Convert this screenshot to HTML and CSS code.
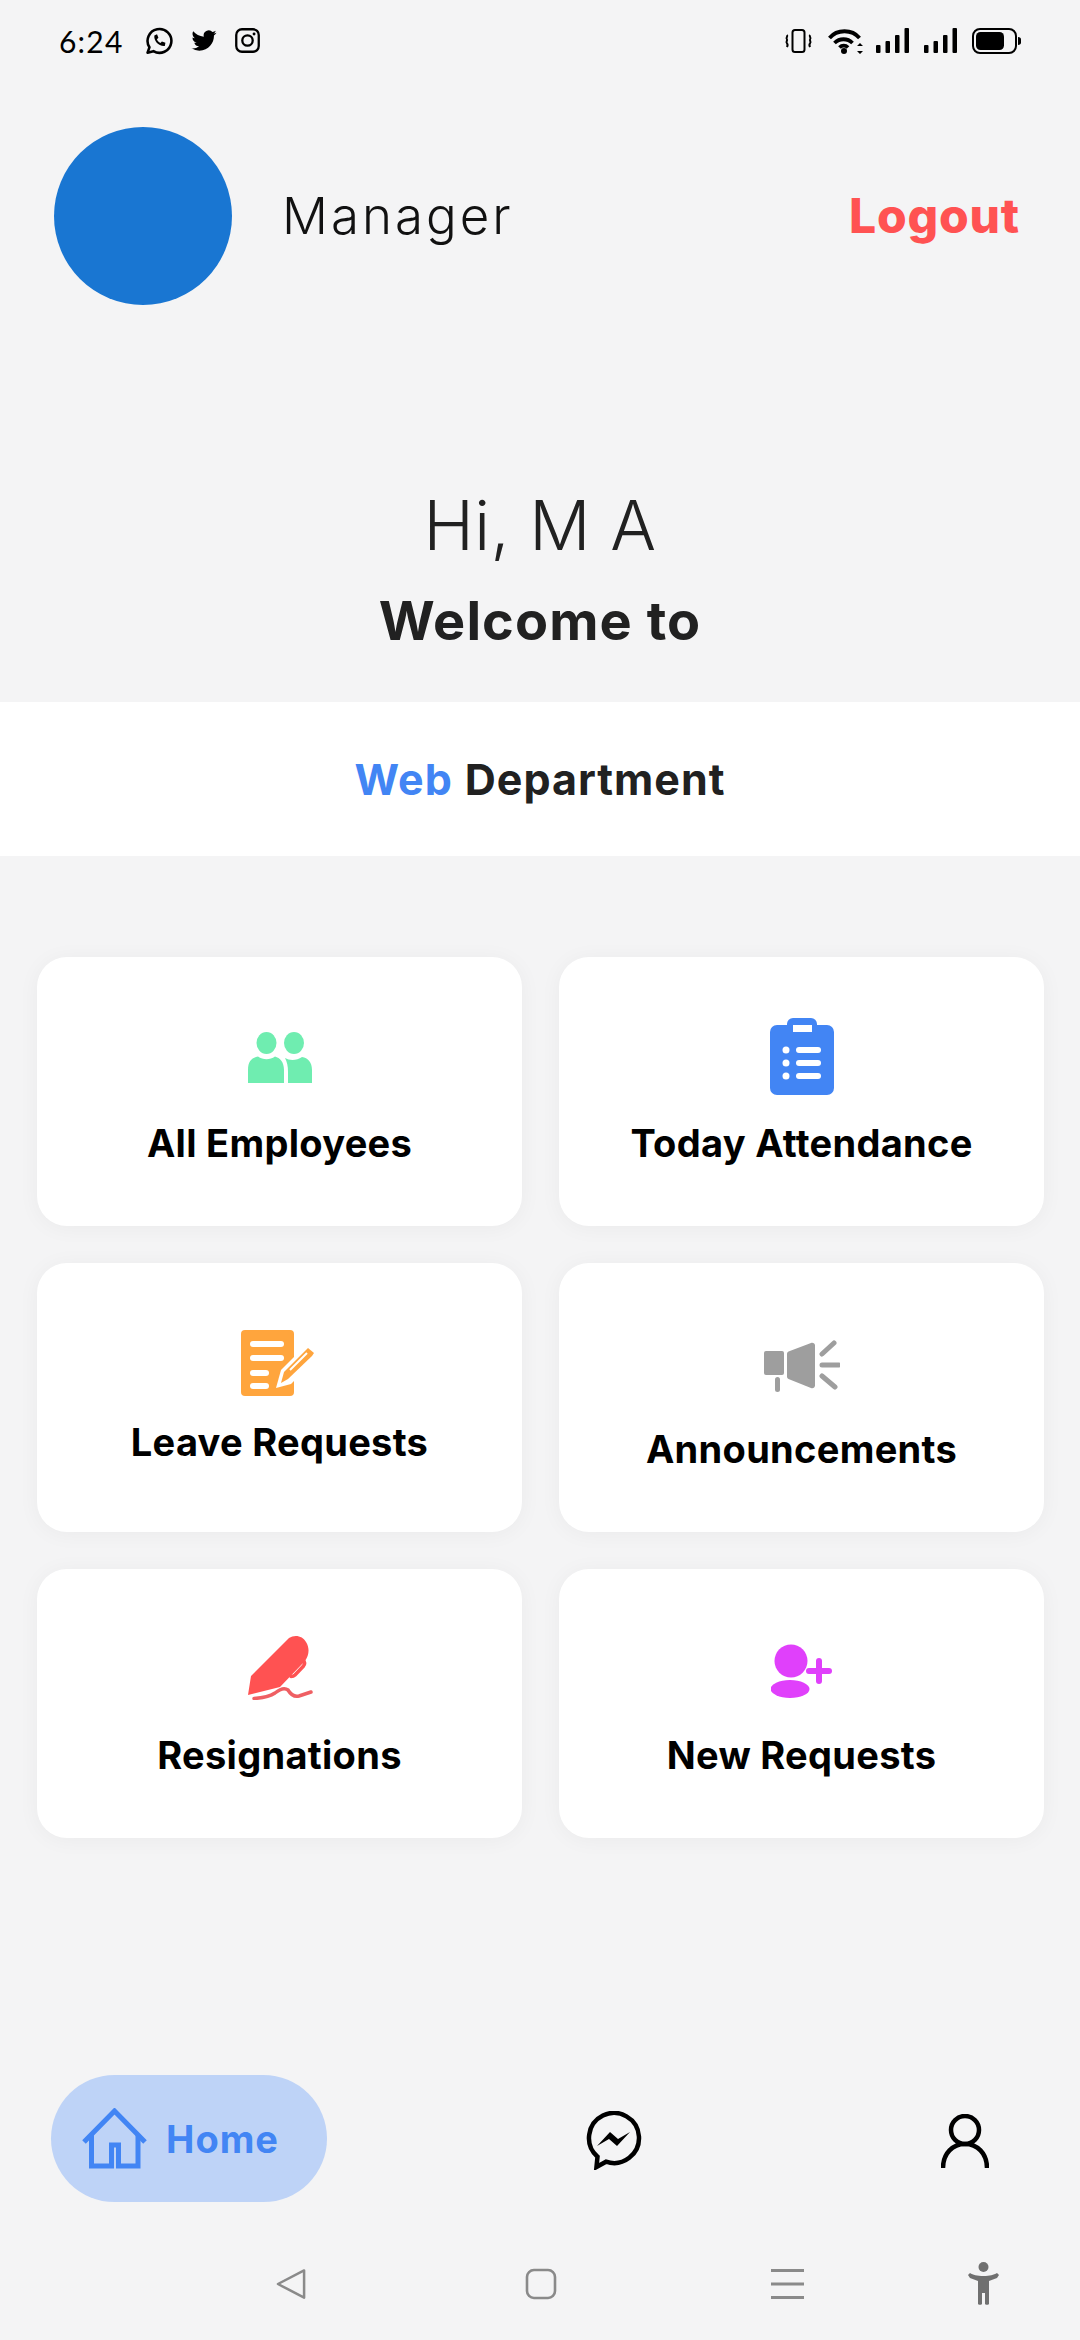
FILE: index.html
```html
<!DOCTYPE html>
<html lang="en">
<head>
<meta charset="utf-8">
<title>Manager</title>
<link rel="stylesheet" href="styles.css">
</head>
<body>
<div class="phone">
  <div class="status">
    <div class="status-left">
      <span class="time">6:24</span>
      <svg class="s-wa" viewBox="0 0 24 24" fill="none" stroke="#000" stroke-width="2.2" stroke-linejoin="round" stroke-linecap="round"><path d="M2.2 22l1.6-4.6a10.2 10.2 0 1 1 3.4 3.3z"/><path d="M8 7.2c-.6 4.5 3.8 9.6 9 9l.5-2.6-3-1.2-1.3 1.4c-1.4-.7-2.4-1.8-3-3.2l1.3-1.4-1.2-3z" fill="#000" stroke="none"/></svg>
      <svg class="s-tw" viewBox="0 0 24 24"><path fill="#000" d="M23.953 4.57a10 10 0 01-2.825.775 4.958 4.958 0 002.163-2.723c-.951.555-2.005.959-3.127 1.184a4.92 4.92 0 00-8.384 4.482C7.69 8.095 4.067 6.13 1.64 3.162a4.822 4.822 0 00-.666 2.475c0 1.71.87 3.213 2.188 4.096a4.904 4.904 0 01-2.228-.616v.06a4.923 4.923 0 003.946 4.827 4.996 4.996 0 01-2.212.085 4.936 4.936 0 004.604 3.417 9.867 9.867 0 01-6.102 2.105c-.39 0-.779-.023-1.17-.067a13.995 13.995 0 007.557 2.209c9.053 0 13.998-7.496 13.998-13.985 0-.21 0-.42-.015-.63A9.935 9.935 0 0024 4.59z"/></svg>
      <svg class="s-ig" viewBox="0 0 24 24" fill="none" stroke="#000" stroke-width="2.2"><rect x="1.2" y="1.2" width="21.6" height="21.6" rx="5.5"/><circle cx="12" cy="12" r="5"/><circle cx="18.3" cy="5.7" r="1.4" fill="#000" stroke="none"/></svg>
    </div>
    <div class="status-right">
      <svg class="s-vib" viewBox="0 0 27 24" fill="none" stroke="#000"><rect x="7.5" y="1" width="12" height="22" rx="2.5" stroke-width="2"/><path d="M1.8 6c1.6 1.5-1.2 2.5 0 4s-1.2 2.5 0 4 1.2 2.5 0 4M25.2 6c-1.6 1.5 1.2 2.5 0 4s1.2 2.5 0 4-1.2 2.500 0 4" stroke-width="2"/></svg>
      <svg class="s-wifi" viewBox="0 0 35 26" fill="none" stroke="#000" stroke-width="3.8"><path d="M1.500 10C9 1 24 1 31.500 10M6.500 15c5-5 13-5 18 0M11.500 19.500c2.500-2.500 6-2.500 8.500 0"/><circle cx="16" cy="23" r="3" fill="#000" stroke="none"/><path d="M32 15l-3 3h6zM32 26l-3-3h6z" fill="#000" stroke="none"/></svg>
      <svg class="s-sig" viewBox="0 0 33 25"><rect x="0" y="17" width="4.500" height="8" rx="1" fill="#000"/><rect x="9.500" y="13" width="4.500" height="12" rx="1" fill="#000"/><rect x="19" y="7" width="4.500" height="18" rx="1" fill="#000"/><rect x="28.500" y="0" width="4.500" height="25" rx="1" fill="#000"/></svg>
      <svg class="s-sig" viewBox="0 0 33 25"><rect x="0" y="17" width="4.500" height="8" rx="1" fill="#000"/><rect x="9.500" y="13" width="4.500" height="12" rx="1" fill="#000"/><rect x="19" y="7" width="4.500" height="18" rx="1" fill="#000"/><rect x="28.500" y="0" width="4.500" height="25" rx="1" fill="#000"/></svg>
      <svg class="s-bat" viewBox="0 0 49 26"><rect x="1" y="1" width="43" height="24" rx="7" fill="none" stroke="#000" stroke-width="2"/><rect x="4" y="4" width="28" height="18" rx="4.500" fill="#000"/><path d="M46 9c2 0 3 1 3 2.500v3c0 1.500-1 2.500-3 2.500z" fill="#000"/></svg>
    </div>
  </div>

  <header class="top">
    <div class="avatar"></div>
    <div class="role">Manager</div>
    <div class="logout">Logout</div>
  </header>

  <section class="hello">
    <div class="hi">Hi, M A</div>
    <div class="welcome">Welcome to</div>
  </section>

  <div class="band"><span class="web">Web</span> Department</div>

  <main class="grid">
    <div class="card">
      <svg class="ic ic-emp" viewBox="0 0 64 51" fill="#6fedb0"><ellipse cx="18.500" cy="11" rx="10" ry="11"/><ellipse cx="46" cy="11" rx="10" ry="11"/><path d="M0 51V38c0-9 4-12 10-13.500 5 3.500 12 3.500 17 0C32 26 36 30 36 38v13z"/><path d="M37 26c5 3 12 2.500 17 -1 6 1 10 5 10 13v13H40V40c0-6-1-10-3-14z"/></svg>
      <div class="label">All Employees</div>
    </div>
    <div class="card">
      <svg class="ic ic-clip" viewBox="0 0 64 77"><path fill="#4285f4" d="M17 7V6a6 6 0 0 1 6-6h18a6 6 0 0 1 6 6v1h10a7 7 0 0 1 7 7v56a7 7 0 0 1-7 7H7a7 7 0 0 1-7-7V14a7 7 0 0 1 7-7z"/><rect x="23" y="7" width="19" height="7" fill="#fff"/><g fill="#fff"><circle cx="16" cy="32" r="3.500"/><circle cx="16" cy="45" r="3.500"/><circle cx="16" cy="58" r="3.500"/><rect x="26" y="29" width="25" height="6" rx="3"/><rect x="26" y="42" width="25" height="6" rx="3"/><rect x="26" y="55" width="25" height="6" rx="3"/></g></svg>
      <div class="label">Today Attendance</div>
    </div>
    <div class="card card-leave">
      <svg class="ic ic-leave" viewBox="0 0 77 66"><rect x="0" y="0" width="53" height="66" rx="4" fill="#ffa53d"/><g fill="#fff"><rect x="9" y="11" width="34" height="6" rx="3"/><rect x="9" y="25" width="34" height="6" rx="3"/><rect x="9" y="40" width="19" height="6" rx="3"/><rect x="9" y="53" width="19" height="6" rx="3"/></g><path d="M35 58l5-18 26-26h4l7 7v6L50 54z" fill="#fff"/><path d="M40 53l3-11 24-24 6 5-2 3-24 23z" fill="#ffa53d"/><path d="M49 40l17-17M54 45l15-15" stroke="#fff" stroke-width="2"/></svg>
      <div class="label">Leave Requests</div>
    </div>
    <div class="card card-ann">
      <svg class="ic ic-ann" viewBox="0 0 76 53" fill="#9e9e9e"><rect x="0" y="12" width="20" height="24" rx="2"/><rect x="11" y="38" width="5" height="15" rx="2.500"/><path d="M23 15c0-1 .5-2 1.500-2.500L47 4c2-.700 4 .5 4 2.500v40c0 2-2 3.300-4 2.500L24.500 40c-1-.400-1.500-1.500-1.500-2.500z"/><g stroke="#9e9e9e" stroke-width="5" stroke-linecap="round"><path d="M58 15L70 4M58 26h17M58 37l13 11"/></g></svg>
      <div class="label">Announcements</div>
    </div>
    <div class="card">
      <svg class="ic ic-res" viewBox="0 0 66 65" fill="#ff5252"><path d="M1 60L4 41 42 3C48-1 56 1 59 7 63 13 62 21 58 26L33 52z"/><path d="M56 25c2 2 2 4 .500 6L48 40c-1 1-2 1.500-4 1.500" fill="none" stroke="#ff5252" stroke-width="3.500" stroke-linecap="round"/><path d="M7 63.500C15 63 22 62 28 58 33 54 37 52 41 55 44 60 48 62 52 61L64 57" fill="none" stroke="#ef5f63" stroke-width="3.500" stroke-linecap="round"/></svg>
      <div class="label">Resignations</div>
    </div>
    <div class="card">
      <svg class="ic ic-new" viewBox="0 0 61 54" fill="#e040fb"><circle cx="20" cy="17" r="16.500"/><ellipse cx="19" cy="45" rx="19.500" ry="9"/><rect x="35" y="24" width="26" height="6" rx="3"/><rect x="45" y="14" width="6" height="26" rx="3"/></svg>
      <div class="label">New Requests</div>
    </div>
  </main>

  <nav class="tabs">
    <div class="pill">
      <svg class="ic-home" viewBox="0 0 65 61" fill="none" stroke="#4285f4" stroke-width="5"><path d="M2 34L32.500 3 63 34"/><path d="M9.500 27v31h20V37h7v21h19.500V27"/></svg>
      <span class="home">Home</span>
    </div>
    <svg class="ic-msg" viewBox="0 0 58 59"><path d="M12.500 45.800A25 25 0 1 1 21 50.700L11.500 56z" fill="none" stroke="#000" stroke-width="4.500"/><path d="M12 35L25 21l8 7 12-7-13 14-8-7z" fill="#000"/></svg>
    <svg class="ic-user" viewBox="0 0 48 54" fill="none" stroke="#000" stroke-width="4.500"><circle cx="24" cy="16" r="14"/><path d="M2 54c0-15 10-24 22-24s22 9 22 24"/></svg>
  </nav>

  <div class="sysnav">
    <svg class="n-back" viewBox="0 0 32 32" fill="none" stroke="#8a8a8a" stroke-width="2.600" stroke-linejoin="round"><path d="M29 2L2 16l27 14z"/></svg>
    <svg class="n-home" viewBox="0 0 32 32" fill="none" stroke="#8a8a8a" stroke-width="2.600"><rect x="2" y="2" width="28" height="28" rx="7"/></svg>
    <svg class="n-menu" viewBox="0 0 33 32" fill="#8a8a8a"><rect y="1" width="33" height="3"/><rect y="14.500" width="33" height="3"/><rect y="28" width="33" height="3"/></svg>
    <svg class="n-acc" viewBox="0 0 33 44" fill="#707070"><ellipse cx="16.500" cy="5" rx="5" ry="5"/><path d="M1 13l2-2c3 2 7 3 13.500 3s10-1 13.500-3l2 2-2 3-8 3v23c0 1-4 1-4 0V31h-3v11c0 1-4 1-4 0V19l-8-3z"/></svg>
  </div>
</div>
</body>
</html>
```
FILE: styles.css
```css
* { box-sizing: border-box; }
html, body { margin: 0; padding: 0; }
body { background: #f4f4f5; font-family: Inter, "Liberation Sans", sans-serif; color: #000; }
.phone { width: 1080px; height: 2340px; display: flex; flex-direction: column; overflow: hidden; background: #f4f4f5; }

.status { height: 81px; padding: 0 59px 0 59px; display: flex; justify-content: space-between; align-items: center; }
.status-left, .status-right { display: flex; align-items: center; }
.time { font-size: 30px; font-family: Lato, sans-serif; width: 86px; letter-spacing: 1.200px; }
.s-wa { width: 28px; height: 28px; }
.s-tw { width: 28px; height: 25px; margin-left: 17px; }
.s-ig { width: 25px; height: 25px; margin-left: 17px; }
.s-vib { width: 27px; height: 24px; }
.s-wifi { width: 35px; height: 26px; margin-left: 16px; }
.s-sig { width: 33px; height: 25px; margin-left: 13px; }
.s-sig + .s-sig { margin-left: 15px; }
.s-bat { width: 49px; height: 26px; margin-left: 15px; }

.top { margin-top: 45px; height: 179px; padding: 0 60px 0 54px; display: flex; align-items: center; }
.avatar { width: 178px; height: 178px; border-radius: 50%; background: #1976d2; }
.role { margin-left: 50px; font-size: 51px; font-weight: 300; letter-spacing: 3px; flex: 1; color: #111; }
.logout { font-size: 48px; font-weight: 800; color: #ff5252; letter-spacing: .8px; }

.hello { margin-top: 180px; display: flex; flex-direction: column; align-items: center; color: #212121; }
.hi { font-size: 68px; font-weight: 300; line-height: 80px; letter-spacing: .3px; }
.welcome { font-size: 54px; font-weight: 700; line-height: 64px; margin-top: 24px; letter-spacing: 1.100px; }

.band { margin-top: 49px; height: 154px; background: #fff; display: flex; align-items: center; justify-content: center; gap: 12px; font-size: 43px; font-weight: 700; color: #212121; letter-spacing: 1px; }
.web { color: #4285f4; }

.grid { margin-top: 101px; padding: 0 37px; display: grid; grid-template-columns: 485px 485px; column-gap: 37px; row-gap: 37px; }
.card { height: 269px; background: #fff; border-radius: 30px; box-shadow: 0 2px 22px rgba(0,0,0,.045); display: flex; flex-direction: column; align-items: center; justify-content: flex-end; padding-bottom: 61px; }
.card-leave { padding-bottom: 68px; }
.label { font-size: 38px; font-weight: 700; line-height: 44px; letter-spacing: .3px; color: #000; }
.ic { display: block; }
.ic-emp { width: 64px; height: 51px; margin-bottom: 38px; }
.ic-clip { width: 64px; height: 77px; margin-bottom: 26px; }
.ic-leave { width: 77px; height: 66px; margin-bottom: 24px; }
.ic-ann { width: 76px; height: 53px; margin-bottom: 35px; }
.ic-res { width: 66px; height: 65px; margin-bottom: 33px; }
.ic-new { width: 61px; height: 54px; margin-bottom: 35px; }

.tabs { margin-top: auto; padding-left: 51px; display: flex; align-items: center; }
.pill { width: 276px; height: 127px; border-radius: 64px; background: #bed3f7; padding-left: 31px; display: flex; align-items: center; gap: 19px; }
.ic-home { width: 65px; height: 61px; }
.home { font-size: 38px; font-weight: 700; letter-spacing: 1px; color: #4285f4; }
.ic-msg { width: 58px; height: 59px; margin: 3px 0 0 258px; }
.ic-user { width: 48px; height: 54px; margin: 4px 0 0 298px; }

.sysnav { height: 138px; padding: 26px 0 0 276px; display: flex; align-items: center; }
.n-back { width: 31px; height: 32px; }
.n-home { width: 32px; height: 32px; margin-left: 218px; }
.n-menu { width: 33px; height: 32px; margin-left: 214px; }
.n-acc { width: 33px; height: 44px; margin-left: 163px; }
```
